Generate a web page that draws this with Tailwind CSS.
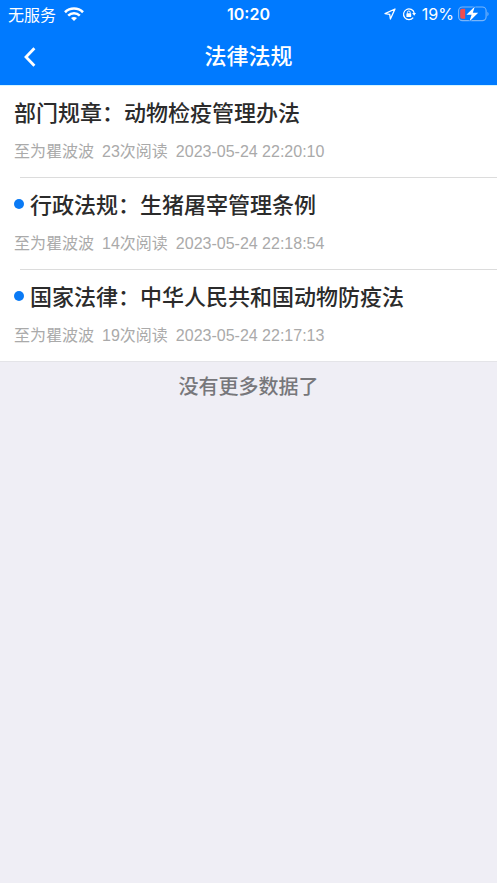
<!DOCTYPE html>
<html lang="zh-CN">

<head>
    <meta charset="utf-8">
    <meta name="viewport" content="width=device-width, initial-scale=1">
    <title>法律法规</title>
    <script src="https://cdn.jsdelivr.net/npm/@tailwindcss/browser@4"></script>
</head>

<body class="min-h-screen bg-[#efeef5] font-['Liberation_Sans','Noto_Sans_CJK_SC',sans-serif]">
    <header class="bg-[#007aff] text-white">
        <!-- status bar -->
        <div class="grid h-7 grid-cols-[1fr_auto_1fr] items-center px-2 text-[16px] leading-6 font-['Inter','Noto_Sans_CJK_SC',sans-serif]">
            <div class="flex items-center gap-2">
                <span class="font-['Noto_Sans_CJK_SC',sans-serif]">无服务</span>
                <svg class="h-[14px] w-5" viewBox="0 0 20 14" fill="none" stroke="currentColor" stroke-width="2.6">
                    <path d="M1 5.2C6 .3 14 .3 19 5.2" />
                    <path d="M4.2 8.6c3.3-3.1 8.3-3.1 11.6 0" />
                    <path d="M10 14 7 11.1c1.7-1.5 4.3-1.5 6 0z" fill="currentColor" stroke="none" />
                </svg>
            </div>
            <span class="font-semibold">10:20</span>
            <div class="flex items-center justify-end gap-1">
                <svg class="mr-0.5 size-3" viewBox="0 0 12 12" fill="none" stroke="currentColor" stroke-width="1.3" stroke-linejoin="round">
                    <path d="M11 1 1 5.6l4.7.7.7 4.7z" />
                </svg>
                <svg class="mr-0.5 size-[14px]" viewBox="0 0 14 14" fill="none" stroke="currentColor" stroke-width="1.2">
                    <path d="M11.2 10.6A5.4 5.4 0 1 1 12.2 6" />
                    <path d="M10.1 6h3.9l-1.8 2.8z" fill="currentColor" stroke="none" />
                    <rect x="4.4" y="6.3" width="4.8" height="3.7" rx=".6" fill="currentColor" stroke="none" />
                    <path d="M5.4 6.5V5.4a1.4 1.4 0 0 1 2.8 0v1.1" stroke-width="1" />
                </svg>
                <span>19%</span>
                <svg class="h-4 w-[31px]" viewBox="0 0 31 16">
                    <rect x=".6" y="1" width="27.5" height="13.6" rx="3.8" fill="none" stroke="#78b5fa" stroke-width="1.1" />
                    <path d="M29.4 5.8v4.4c1.6-.8 1.6-3.6 0-4.4z" fill="#78b5fa" />
                    <path d="M4 2.8h3.2v10H4A1.8 1.8 0 0 1 2.2 11V4.6A1.8 1.8 0 0 1 4 2.8z" fill="#ef4d50" />
                    <path d="M16.8.4 8.4 8.7h5.2L11.4 15.4l8.8-8.7h-5.4z" fill="#fff" stroke="#007aff" stroke-width="1.4" paint-order="stroke" />
                </svg>
            </div>
        </div>

        <!-- title bar -->
        <div class="grid h-[57px] grid-cols-[1fr_auto_1fr] items-center">
            <button type="button" aria-label="返回" class="ml-4 flex size-7 items-center justify-center">
                <svg class="h-5 w-3" viewBox="0 0 12 20" fill="none" stroke="currentColor" stroke-width="2.8">
                    <path d="M10.4 1.2 2 10l8.4 8.8" />
                </svg>
            </button>
            <h1 class="text-[22px] leading-8 font-medium">法律法规</h1>
        </div>
    </header>

    <main>
        <ul class="border-t border-[#d5f5ff] bg-white">
            <li>
                <a href="#" class="block px-[14px] pt-3">
                    <h2 class="text-[22px] leading-8 font-medium text-[#2b2b2b]">部门规章：动物检疫管理办法</h2>
                    <p class="flex gap-2 pt-[10px] pb-[13px] text-[16px] leading-6 text-[#aaaaaa]">
                        <span>至为瞿波波</span><span>23次阅读</span><span>2023-05-24 22:20:10</span>
                    </p>
                </a>
                <div class="ml-5 h-px bg-[#dcdcdc]"></div>
            </li>
            <li>
                <a href="#" class="block px-[14px] pt-3">
                    <div class="flex items-center gap-[6px]">
                        <span class="mb-1 size-[10px] rounded-full bg-[#0a7af5]"></span>
                        <h2 class="text-[22px] leading-8 font-medium text-[#2b2b2b]">行政法规：生猪屠宰管理条例</h2>
                    </div>
                    <p class="flex gap-2 pt-[10px] pb-[13px] text-[16px] leading-6 text-[#aaaaaa]">
                        <span>至为瞿波波</span><span>14次阅读</span><span>2023-05-24 22:18:54</span>
                    </p>
                </a>
                <div class="ml-5 h-px bg-[#dcdcdc]"></div>
            </li>
            <li>
                <a href="#" class="block px-[14px] pt-3">
                    <div class="flex items-center gap-[6px]">
                        <span class="mb-1 size-[10px] rounded-full bg-[#0a7af5]"></span>
                        <h2 class="text-[22px] leading-8 font-medium text-[#2b2b2b]">国家法律：中华人民共和国动物防疫法</h2>
                    </div>
                    <p class="flex gap-2 pt-[10px] pb-[13px] text-[16px] leading-6 text-[#aaaaaa]">
                        <span>至为瞿波波</span><span>19次阅读</span><span>2023-05-24 22:17:13</span>
                    </p>
                </a>
                <div class="h-px bg-[#e4e4e8]"></div>
            </li>
        </ul>
        <p class="py-[11px] text-center text-[20px] leading-7 font-medium text-[#77777b]">没有更多数据了</p>
    </main>
</body>

</html>
